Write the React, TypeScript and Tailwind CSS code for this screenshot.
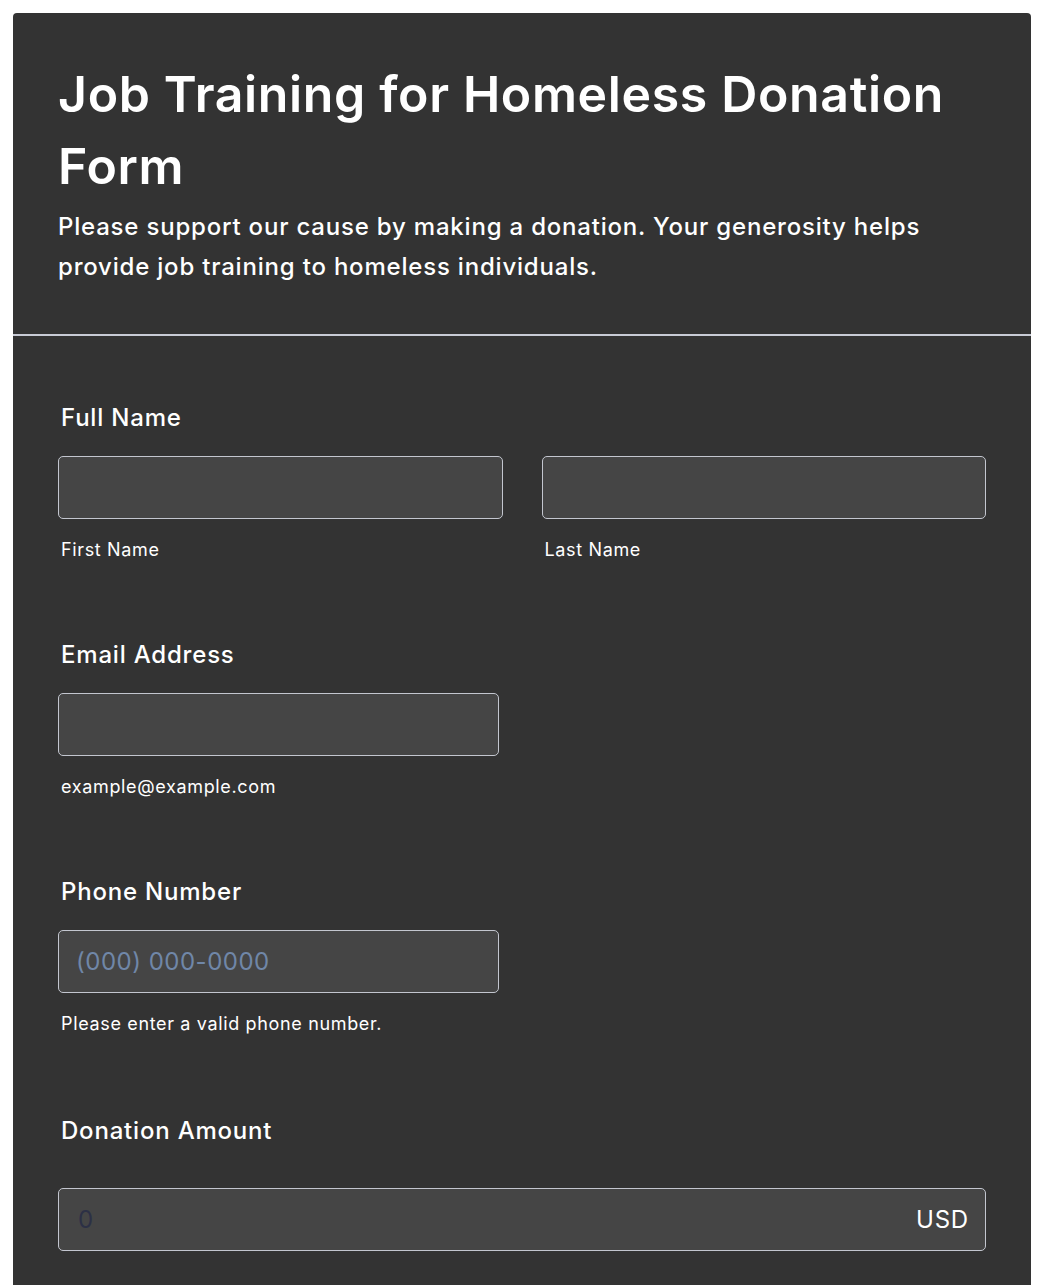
export default function App() {
  return (
    <div className="min-h-screen bg-white pt-[13px] px-[13px]" style={{ fontFamily: "Inter, 'Noto Sans', sans-serif" }}>
      <div className="w-[1018px] bg-[#333333] rounded-[4px] text-white tracking-[0.7px]">
        {/* header */}
        <div className="px-[45px] pt-[45px] pb-[47px] border-b-2 border-[#c8cbd5]">
          <h1 className="text-[50px] leading-[72px] font-semibold tracking-[0.65px]">Job Training for Homeless Donation Form</h1>
          <p className="mt-[5px] text-[24px] leading-[40px] font-medium tracking-[0.8px]">
            Please support our cause by making a donation. Your generosity helps provide job training to homeless individuals.
          </p>
        </div>

        {/* form */}
        <div className="px-[45px] pt-[66px] pb-[40px]">
          <Label>Full Name</Label>
          <div className="mt-[22px] flex gap-[39px]">
            <div className="flex-1">
              <Box />
              <Sub>First Name</Sub>
            </div>
            <div className="flex-1">
              <Box />
              <Sub>Last Name</Sub>
            </div>
          </div>

          <div className="mt-[76px]">
            <Label>Email Address</Label>
            <div className="mt-[22px] w-[441px]">
              <Box />
              <Sub>example@example.com</Sub>
            </div>
          </div>

          <div className="mt-[76px]">
            <Label>Phone Number</Label>
            <div className="mt-[22px] w-[441px]">
              <Box placeholder="(000) 000-0000" />
              <Sub>Please enter a valid phone number.</Sub>
            </div>
          </div>

          <div className="mt-[78px]">
            <Label>Donation Amount</Label>
            <div className="mt-[41px] h-[63px] rounded-[5px] border border-[#c3c6cf] bg-[#454545] flex items-center pl-[19px] pr-[16px]">
              <input
                placeholder="0"
                className="flex-1 bg-transparent outline-none text-[24px] tracking-[0.6px] placeholder:text-[#2c3045]"
              />
              <span className="text-[24px] tracking-[0.8px]">USD</span>
            </div>
          </div>
        </div>
      </div>
    </div>
  );
}

function Label({ children }: { children: React.ReactNode }) {
  return <div className="pl-[3px] text-[24px] leading-[32px] font-medium tracking-[0.8px]">{children}</div>;
}

function Sub({ children }: { children: React.ReactNode }) {
  return <div className="mt-[18px] pl-[3px] text-[18px] leading-[26px] tracking-[0.65px]">{children}</div>;
}

function Box({ placeholder }: { placeholder?: string }) {
  return (
    <input
      placeholder={placeholder}
      className="block w-full h-[63px] rounded-[5px] border border-[#c3c6cf] bg-[#454545] px-[17px] text-[24px] tracking-[0.5px] text-white outline-none placeholder:text-[#7087a8]"
    />
  );
}
